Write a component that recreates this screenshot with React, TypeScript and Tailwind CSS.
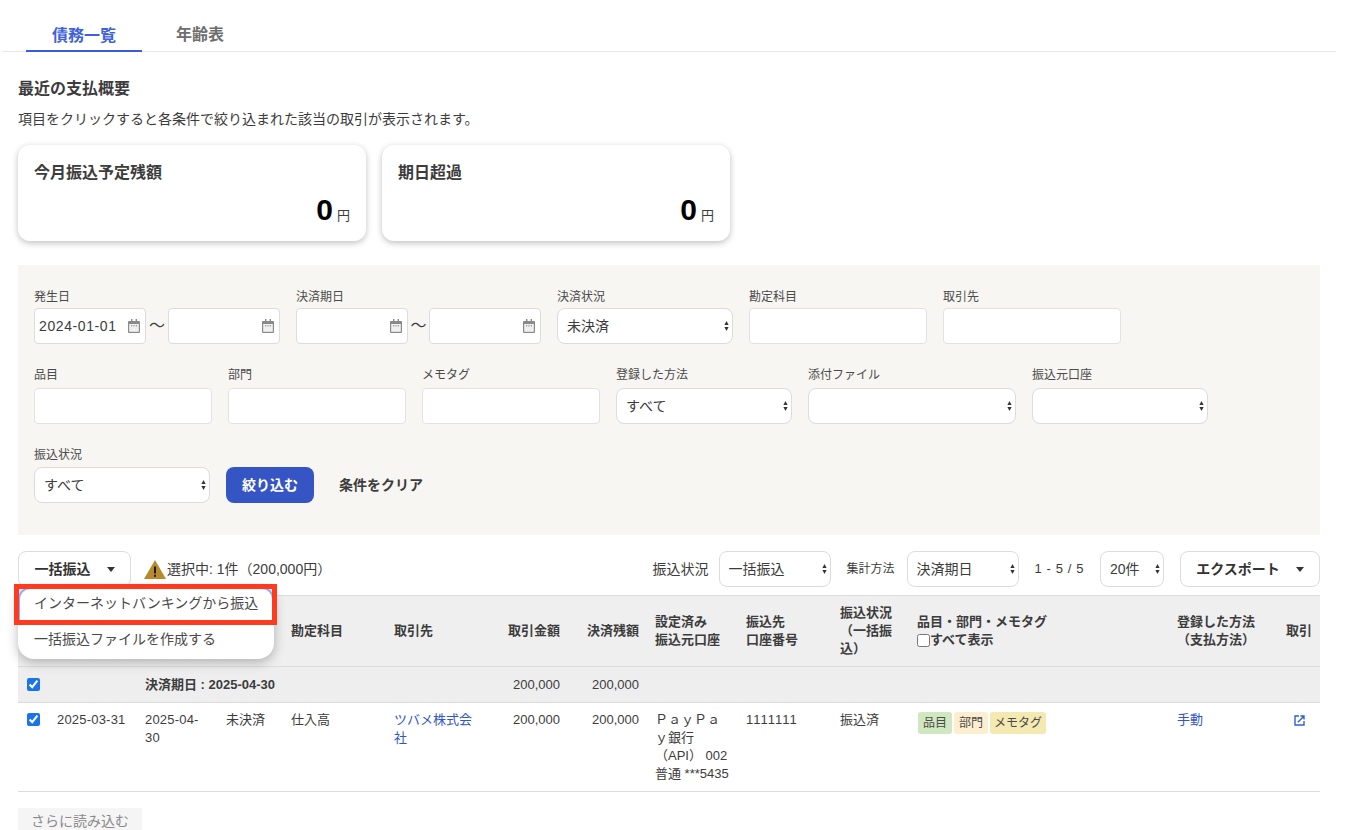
const F = "font-['Liberation_Sans','Noto_Sans_CJK_JP',sans-serif]";

function Cal() {
  return (
    <svg width="12" height="14" viewBox="0 0 12 14" className="shrink-0">
      <rect x="3" y="0" width="1.4" height="3" fill="#8a8a8a" />
      <rect x="7.6" y="0" width="1.4" height="3" fill="#8a8a8a" />
      <path d="M1 2h10a1 1 0 0 1 1 1v10a1 1 0 0 1-1 1H1a1 1 0 0 1-1-1V3a1 1 0 0 1 1-1z" fill="#8a8a8a" />
      <rect x="1.2" y="5" width="9.6" height="7.8" fill="#f0f0f0" />
      <rect x="3" y="6.2" width="1.2" height="1.2" fill="#8a8a8a" />
      <rect x="5.4" y="6.2" width="1.2" height="1.2" fill="#8a8a8a" />
      <rect x="7.8" y="6.2" width="1.2" height="1.2" fill="#8a8a8a" />
    </svg>
  );
}

function Updown() {
  return (
    <svg width="5" height="10" viewBox="0 0 5 10" className="pointer-events-none absolute right-[4px] top-1/2 -translate-y-1/2">
      <path d="M2.5 0L4.6 4H.4z" fill="#333" />
      <path d="M2.5 10L.4 6h4.2z" fill="#333" />
    </svg>
  );
}

function DateBox({ value }: { value?: string }) {
  return (
    <div className="flex h-9 w-[112px] items-center justify-between rounded-[4px] border border-[#dcdcdc] bg-white pl-[4px] pr-[5px] text-[14px] tracking-[0.6px] text-[#3c3c3c]">
      <span>{value}</span>
      <Cal />
    </div>
  );
}

function TextBox({ w }: { w: string }) {
  return <input className={`block h-9 ${w} rounded-[4px] border border-[#e2e2e2] bg-white`} />;
}

function Sel({ w, value }: { w: string; value: string }) {
  return (
    <div className={`relative h-9 ${w} shrink-0`}>
      <select
        defaultValue={value}
        className="block h-9 w-full appearance-none rounded-[8px] border border-[#dcdcdc] bg-white pl-[9px] pr-3 text-[14px] text-[#3c3c3c]"
      >
        <option value={value}>{value}</option>
      </select>
      <Updown />
    </div>
  );
}

function Field({ label, gap, children }: { label: string; gap: string; children: React.ReactNode }) {
  return (
    <div>
      <div className={`${gap} h-[19px] text-[12px] leading-[19px] text-[#4a4a4a]`}>{label}</div>
      {children}
    </div>
  );
}

function Caret() {
  return (
    <svg width="8" height="5" viewBox="0 0 8 5" className="shrink-0">
      <path d="M0 0h8L4 5z" fill="#333" />
    </svg>
  );
}

function DropBtn({ label, w }: { label: string; w: string }) {
  return (
    <button className={`flex h-9 ${w} shrink-0 items-center justify-center gap-4 rounded-[8px] border border-[#dcdcdc] bg-white text-[14px] font-bold text-[#333]`}>
      <span>{label}</span>
      <Caret />
    </button>
  );
}

function Warn() {
  return (
    <svg width="22" height="19" viewBox="0 0 22 19" className="shrink-0">
      <path d="M11 0L22 19H0z" fill="#b98a2c" />
      <rect x="10" y="6.5" width="2" height="7" fill="#1f1a10" />
      <rect x="10" y="14.8" width="2" height="2" fill="#1f1a10" />
    </svg>
  );
}

const th = "border-b border-t border-[#dcdcdc] bg-[#efefef] px-2 align-middle text-[13px] font-bold leading-[18px] text-[#3c3c3c]";

export default function App() {
  return (
    <div className={`${F} h-[830px] overflow-hidden bg-white text-[13px] text-[#3c3c3c]`}>
      <div className="ml-[2px] mr-[10px] flex h-[52px] items-end border-b border-[#e8e8e8] pl-[24px]">
        <div className="-mb-px flex h-[36px] w-[116px] items-start justify-center border-b-2 border-[#3a5bdc] pt-[3px] text-[16px] font-bold leading-[34px] text-[#3f62dc]">債務一覧</div>
        <div className="ml-[34px] h-[36px] pt-[3px] text-[16px] font-bold leading-[34px] text-[#6e6e6e]">年齢表</div>
      </div>

      <div className="px-[18px] pr-[26px]">
        <h2 className="mt-[26px] text-[16px] font-bold leading-[22px] text-[#3c3c3c]">最近の支払概要</h2>
        <p className="mt-[9px] text-[14px] leading-[20px] text-[#3c3c3c]">項目をクリックすると各条件で絞り込まれた該当の取引が表示されます。</p>

        <div className="mt-[16px] flex gap-4">
          {["今月振込予定残額", "期日超過"].map((t) => (
            <div key={t} className="flex h-24 w-[348px] flex-col rounded-[12px] bg-white px-4 pt-[17px] shadow-[0_2px_6px_rgba(0,0,0,0.25)]">
              <div className="text-[16px] font-bold leading-[22px] text-[#3c3c3c]">{t}</div>
              <div className="mt-[8px] flex items-baseline justify-end gap-[4px]">
                <span className="text-[30px] font-bold leading-[36px] text-black">0</span>
                <span className="text-[13px] text-[#3c3c3c]">円</span>
              </div>
            </div>
          ))}
        </div>

        <div className="mt-6 h-[270px] w-[1302px] bg-[#f7f6f2] px-4 pt-[23px]">
          <div className="flex gap-4">
            <Field label="発生日" gap="mb-[1px]">
              <div className="flex items-center gap-[3px]">
                <DateBox value="2024-01-01" />
                <span className="text-[16px] text-[#3c3c3c]">〜</span>
                <DateBox />
              </div>
            </Field>
            <Field label="決済期日" gap="mb-[1px]">
              <div className="flex items-center gap-[2.5px]">
                <DateBox />
                <span className="text-[16px] text-[#3c3c3c]">〜</span>
                <DateBox />
              </div>
            </Field>
            <Field label="決済状況" gap="mb-[1px]"><Sel w="w-[176px]" value="未決済" /></Field>
            <Field label="勘定科目" gap="mb-[1px]"><TextBox w="w-[178px]" /></Field>
            <Field label="取引先" gap="mb-[1px]"><TextBox w="w-[178px]" /></Field>
          </div>
          <div className="mt-[22px] flex gap-4">
            <Field label="品目" gap="mb-[3px]"><TextBox w="w-[178px]" /></Field>
            <Field label="部門" gap="mb-[3px]"><TextBox w="w-[178px]" /></Field>
            <Field label="メモタグ" gap="mb-[3px]"><TextBox w="w-[178px]" /></Field>
            <Field label="登録した方法" gap="mb-[3px]"><Sel w="w-[176px]" value="すべて" /></Field>
            <Field label="添付ファイル" gap="mb-[3px]"><Sel w="w-[208px]" value="" /></Field>
            <Field label="振込元口座" gap="mb-[3px]"><Sel w="w-[176px]" value="" /></Field>
          </div>
          <div className="mt-[22px] flex items-end gap-4">
            <Field label="振込状況" gap="mb-[2px]"><Sel w="w-[176px]" value="すべて" /></Field>
            <button className="h-9 w-[88px] rounded-[8px] bg-[#3655c4] text-[14px] font-bold text-white">絞り込む</button>
            <button className="ml-[9px] h-9 text-[14px] font-bold text-[#3c3c3c]">条件をクリア</button>
          </div>
        </div>

        <div className="relative mt-4 w-[1302px]">
          <div className="flex h-9 items-center">
            <DropBtn label="一括振込" w="w-[113px]" />
            <span className="ml-[13px] flex items-center gap-px text-[14px] text-[#3c3c3c]"><Warn />選択中: 1件（200,000円）</span>
            <span className="ml-auto text-[14px]">振込状況</span>
            <div className="ml-[10px]"><Sel w="w-[112px]" value="一括振込" /></div>
            <span className="ml-4 text-[12px]">集計方法</span>
            <div className="ml-3"><Sel w="w-[112px]" value="決済期日" /></div>
            <span className="ml-4 tracking-[0.6px]">1 - 5 / 5</span>
            <div className="ml-4"><Sel w="w-[64px]" value="20件" /></div>
            <div className="ml-4"><DropBtn label="エクスポート" w="w-[140px]" /></div>
          </div>

          <div className="absolute left-0 top-[36px] z-10 h-[72px] w-[256px] rounded-b-[16px] rounded-t-[12px] bg-white shadow-[0_3px_12px_rgba(0,0,0,0.28)]">
            <div className="h-[36px] rounded-t-[12px] border-2 border-b-0 border-[#8ab0ff] pl-[14px] text-[14px] leading-[28px] text-[#4a4a4a]">インターネットバンキングから振込</div>
            <div className="h-[36px] pl-4 text-[14px] leading-[32px] text-[#4a4a4a]">一括振込ファイルを作成する</div>
          </div>
          <div className="pointer-events-none absolute left-[-4px] top-[33px] z-20 h-[41px] w-[263px] border-[5px] border-[#ff3b1f]"></div>

          <table className="mt-[8px] w-[1302px] table-fixed border-collapse">
            <colgroup>
              {[30, 88, 82, 65, 103, 97, 85, 79, 91, 94, 77, 260, 109, 42].map((w, i) => (
                <col key={i} style={{ width: w }} />
              ))}
            </colgroup>
            <thead>
              <tr className="h-[71px]">
                <th className={th}></th>
                <th className={th}></th>
                <th className={th}></th>
                <th className={th}></th>
                <th className={`${th} text-left`}>勘定科目</th>
                <th className={`${th} text-left`}>取引先</th>
                <th className={`${th} text-right`}>取引金額</th>
                <th className={`${th} text-right`}>決済残額</th>
                <th className={`${th} text-left`}>設定済み<br />振込元口座</th>
                <th className={`${th} text-left`}>振込先<br />口座番号</th>
                <th className={`${th} text-left`}>振込状況（一括振込）</th>
                <th className={`${th} text-left`}>
                  品目・部門・メモタグ
                  <label className="flex items-center">
                    <input type="checkbox" className="m-0 h-[13px] w-[13px]" />すべて表示
                  </label>
                </th>
                <th className={`${th} !pr-[23px] text-center`}>登録した方法<br />（支払方法）</th>
                <th className={`${th} text-center`}>取引</th>
              </tr>
            </thead>
            <tbody>
              <tr className="h-[36px] border-b border-[#dcdcdc] bg-[#eeeeee] text-[13px]">
                <td className="pl-[9px]"><input type="checkbox" defaultChecked className="block h-[13px] w-[13px] accent-[#1a73e8]" /></td>
                <td></td>
                <td colSpan={4} className="pl-[9px] text-[13px] font-bold">決済期日 : 2025-04-30</td>
                <td className="px-2 text-right">200,000</td>
                <td className="px-2 text-right">200,000</td>
                <td colSpan={6}></td>
              </tr>
              <tr className="h-[89px] border-b border-[#dcdcdc] align-top text-[13px] leading-[18px]">
                <td className="pl-[9px] pt-[10px]"><input type="checkbox" defaultChecked className="block h-[13px] w-[13px] accent-[#1a73e8]" /></td>
                <td className="whitespace-nowrap pl-[9px] pt-[8px] tracking-[0.2px]">2025-03-31</td>
                <td className="pl-[9px] pr-2 pt-[8px] tracking-[0.2px]">2025-04-30</td>
                <td className="px-2 pt-[8px]">未決済</td>
                <td className="px-2 pt-[8px]">仕入高</td>
                <td className="px-2 pt-[8px] text-[#2f55c8]">ツバメ株式会社</td>
                <td className="px-2 pt-[8px] text-right">200,000</td>
                <td className="px-2 pt-[8px] text-right">200,000</td>
                <td className="px-2 pt-[8px]">ＰａｙＰａｙ銀行（API） 002 普通 ***5435</td>
                <td className="px-2 pt-[8px] [font-kerning:none]">1111111</td>
                <td className="px-2 pt-[8px]">振込済</td>
                <td className="pl-[9px] pt-[9px]">
                  <div className="flex gap-[2px] text-[12px] leading-[22px] text-[#4a4a4a]">
                    <span className="rounded-[3px] bg-[#cfe8bf] px-[5px]">品目</span>
                    <span className="rounded-[3px] bg-[#fdeed0] px-[5px]">部門</span>
                    <span className="rounded-[3px] bg-[#f4e9b0] px-[4px]">メモタグ</span>
                  </div>
                </td>
                <td className="px-2 pt-[8px] text-[#2f55c8]">手動</td>
                <td className="pt-[12px]">
                  <svg width="11" height="11" viewBox="0 0 11 11" className="mx-auto" fill="none" stroke="#2f62c8" strokeWidth="1.4">
                    <path d="M5 1H1v9h9V6" />
                    <path d="M3.8 7.2L9.6 1.4M6.4 1h3.6v3.6" />
                  </svg>
                </td>
              </tr>
            </tbody>
          </table>

          <button className="mt-4 h-[26px] w-[124px] bg-[#f5f5f5] text-[14px] text-[#8a8a8a]">さらに読み込む</button>
        </div>
      </div>
    </div>
  );
}
